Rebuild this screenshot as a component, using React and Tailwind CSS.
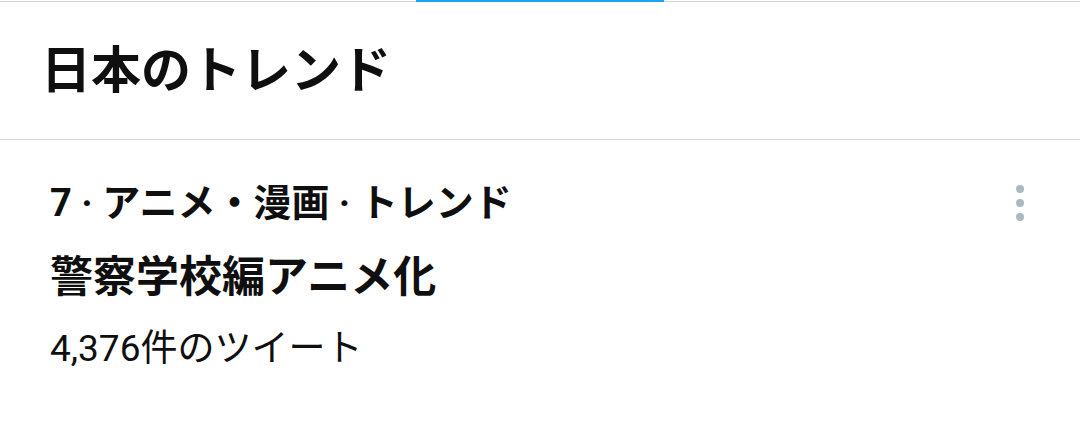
export default function App() {
  return (
    <div
      className="w-[1080px] h-[424px] bg-white text-[#0f0f0f] overflow-hidden"
      style={{ fontFamily: 'Roboto, "Noto Sans CJK JP", sans-serif' }}
    >
      {/* tab indicator */}
      <div className="flex items-start h-[3px]">
        <div className="flex-1 mt-[1px] h-[1px] bg-[#ccd6dd]" />
        <div className="w-[248px] h-[2px] bg-[#1da1f2]" />
        <div className="flex-1 mt-[1px] h-[1px] bg-[#ccd6dd]" />
      </div>

      <div className="h-[136px] flex items-center px-[41px]">
        <h1 className="text-[50px] font-bold leading-none">日本のトレンド</h1>
      </div>
      <div className="h-[1px] bg-[#cfd9de]" />

      <div className="pt-[43px] pl-[50px] pr-[56px]">
        <div className="flex justify-between items-center">
          <div className="text-[38px] font-bold leading-[40px]">7 · アニメ・漫画 · トレンド</div>
          <div className="flex flex-col gap-[6px]">
            <span className="w-2 h-2 rounded-full bg-[#aab8c2]" />
            <span className="w-2 h-2 rounded-full bg-[#aab8c2]" />
            <span className="w-2 h-2 rounded-full bg-[#aab8c2]" />
          </div>
        </div>
        <div className="mt-[30px] text-[43px] font-bold leading-[48px]">警察学校編アニメ化</div>
        <div className="mt-[28px] text-[37px] leading-[40px]">4,376件のツイート</div>
      </div>
    </div>
  )
}
